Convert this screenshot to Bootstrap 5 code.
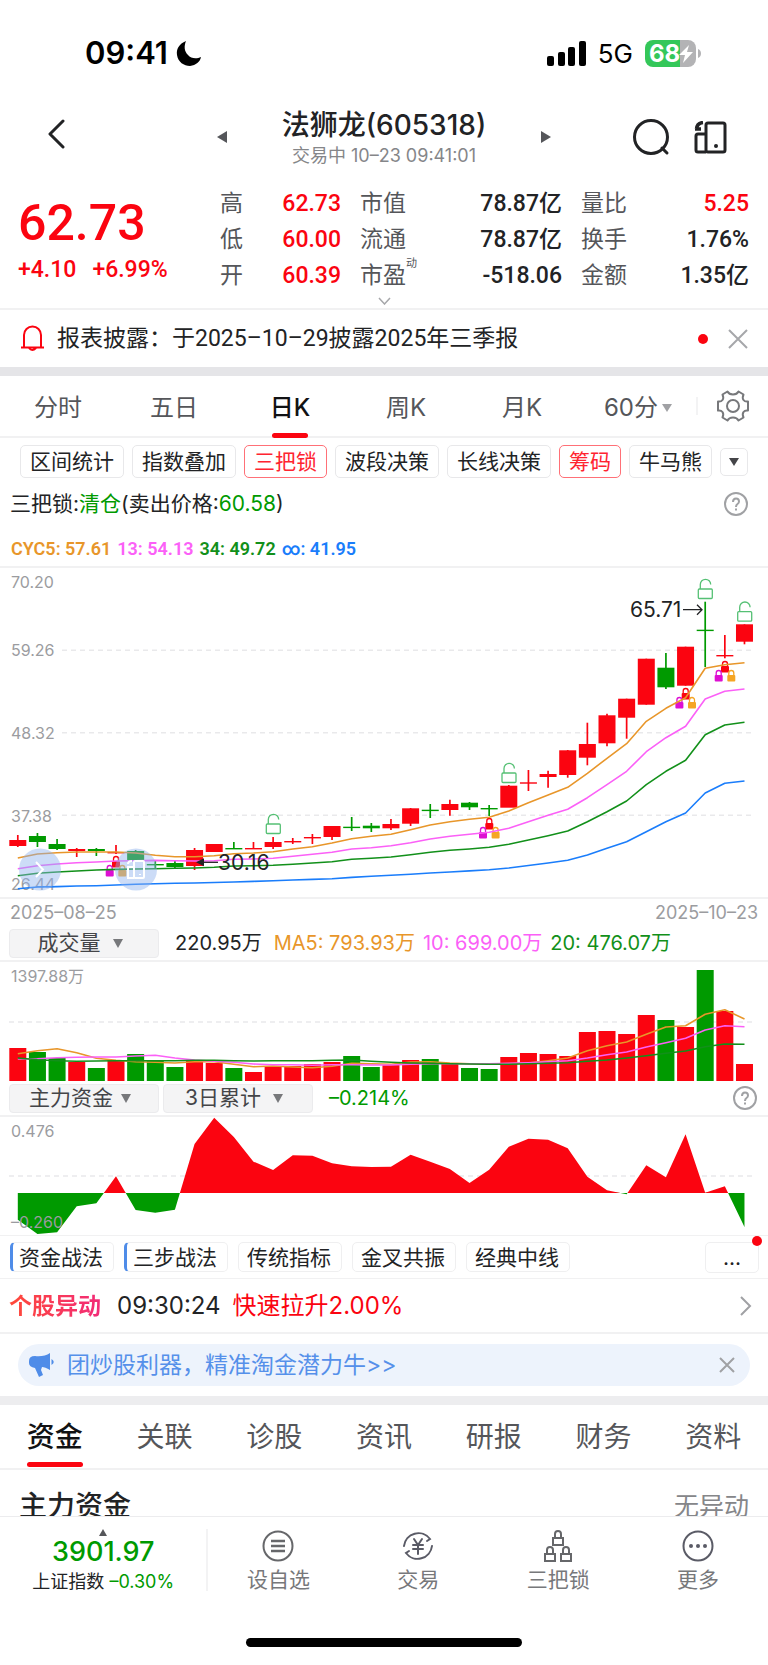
<!DOCTYPE html>
<html lang="zh-CN">
<head>
<meta charset="utf-8">
<meta name="viewport" content="width=device-width, initial-scale=1">
<title>法狮龙(605318)</title>
<link href="https://cdn.jsdelivr.net/npm/bootstrap@5.3.0/dist/css/bootstrap.min.css" rel="stylesheet">
<style>
:root{--up:#fb0410;--down:#009a00;--line:#f1f1f2;--ink:#222325;--soft:#55565a;--pale:#9b9ca0}
body{font-family:Inter,"Noto Sans CJK SC",sans-serif;color:var(--ink);background:#fff;line-height:1.5;overflow-x:hidden}
.din{font-family:Roboto,"Noto Sans CJK SC",sans-serif;font-weight:500}
button{background:none;border:0;padding:0;color:inherit}
a{color:inherit;text-decoration:none}
svg{display:block;flex:none}
.up{color:var(--up)}.down{color:var(--down)}.soft{color:var(--soft)}.pale{color:var(--pale)}
.c-orange{color:#e8962a}.c-pink{color:#fb60f7}.c-green{color:#12901a}.c-blue{color:#1a7dfb}
.rule-b{border-bottom:2px solid var(--line)}
.band{height:9px;background:#e5e5e8}
.band.light{background:#ededef}
.status{height:97px;padding:9px 66px 0 85px}
.clock{font-size:31px;font-weight:600}
.net{font-size:26px}
.head{height:80px;padding:0 41px}
.back{padding-left:6px}
.head-mid{width:334px}
.title{font-size:28px;font-weight:500;line-height:38px}
.subtitle{font-size:18px;line-height:24px;color:#858689}
.quote{display:grid;grid-template-columns:183fr 121fr 202fr 168fr;column-gap:19px;padding:9px 19px 0 18px}
.price{font-size:50px;line-height:60px;padding-top:7px}
.change{font-size:23px;line-height:34px}
.quote dl>div{height:36px;font-size:23px;line-height:36px}
.quote dt{font-weight:400;color:var(--soft)}
.quote sup{font-size:11px;top:-16px}
.more{height:16px}
.notice{height:57px;padding:0 20px;font-size:23px;line-height:33px}
.notice .din{font-weight:400}
.dot{width:10px;height:10px;border-radius:50%;background:var(--up)}
.tabs{height:62px}
.tabs button{font-size:24px;position:relative}
.tabs .col{padding-top:4px}
.tabs .active,.subtabs .active{color:#111214;font-weight:500}
.tabs .active::after,.subtabs .active::after{content:"";position:absolute;left:50%;bottom:-2px;width:36px;height:5px;margin-left:-18px;border-radius:3px;background:var(--up)}
.set{width:70px}
.chips{padding:7px 20px 0;gap:8px}
.chip{border:1px solid #e8e8ea;border-radius:5px;font-size:21px;line-height:31px;padding:0 9px;white-space:nowrap}
.chip.on{border-color:#ff7077;color:#ff2430}
.chip.sm{width:29px;height:28px;padding:0}
.info{height:52px;padding:0 20px 0 10px;font-size:21px}
.cyc{height:38px;padding:0 11px;font-size:18px;font-weight:600;gap:6px}
.dates{height:29px;padding:0 10px;font-size:18px;border-top:2px solid var(--line)}
.ind{height:36px;padding:0 11px 0 9px;font-size:20px}
.pick{width:150px;height:29px;background:#f4f4f5;border:1px solid #ebebed;border-radius:4px;font-size:21px;line-height:24px;color:#444548;padding-right:8px}
.plot{width:100%;height:auto}
.plot text{font-family:Inter,"Noto Sans CJK SC",sans-serif;font-size:16px;fill:#9b9ca0}
.plot .note{font-size:21px;fill:#222325}
.strat{height:44px;padding:0 9px 0 10px;gap:10px;border-top:1px solid var(--line);border-bottom:1px solid var(--line)}
.strat .chip{width:104px;height:30px;line-height:27px;border-color:#efeff0;padding:0 2px 0 0}
.strat .bar{border-left:3px solid #4f8ce8;padding-right:4px}
.strat .etc{width:54px;height:31px;padding:0}
.mark-new{position:absolute;right:-4px;top:-7px}
.alert-row{height:55px;padding:1px 16px 0 9px;font-size:24px}
.grad{font-size:23px;font-weight:700;background:linear-gradient(90deg,#ff4a38,#f22a78);-webkit-background-clip:text;background-clip:text;color:transparent}
.promo{height:42px;margin:10px 18px;border-radius:21px;background:#edf3fc;color:#5590ea;font-size:23px;padding:0 15px 0 11px}
.subtabs{height:65px}
.subtabs a{font-size:28px;position:relative;color:var(--soft)}
.subtabs .active::after{width:56px;margin-left:-28px;bottom:1px}
.fund{height:46px;overflow:hidden;padding:15px 19px 0}
.fund h2{font-size:28px;line-height:42px;font-weight:500}
.fund span{font-size:25px;line-height:42px;color:#858689}
.dock{border-top:1px solid #ececee;padding-top:12px}
.index{flex:207 1 0}
.dock nav{flex:561 1 0}
.index b{font-size:27px;font-weight:500;line-height:32px}
.index small{font-size:18px;line-height:28px}
.dock nav a{font-size:21px;line-height:34px;color:#77787b}
.vr-l{width:2px;height:62px;background:#f3f3f4}
.tabs .vr-l{height:18px}
.homebar{width:276px;height:9px;border-radius:5px;background:#000;margin:41px auto 13px}
</style>
</head>
<body>
<div class="status d-flex align-items-center justify-content-between">
  <div class="d-flex align-items-center gap-2 text-black"><span class="clock">09:41</span>
    <svg width="26" height="27" viewBox="0 0 26 27"><path d="M10 1C3 4 0 9 1 15c1 7 7 11 13 11 6-1 10-4 11-9-4 2-10 2-13-2-4-4-4-9-2-14z"/></svg></div>
  <div class="d-flex align-items-center text-black">
    <svg width="39" height="25" viewBox="0 0 39 25"><rect y="15" width="7" height="10" rx="2"/><rect x="11" y="11" width="7" height="14" rx="2"/><rect x="21" y="6" width="7" height="19" rx="2"/><rect x="32" width="7" height="25" rx="2"/></svg>
    <span class="net mx-2 px-1">5G</span>
    <svg width="57" height="27" viewBox="0 0 57 27"><path d="M8 0h27v27H8a8 8 0 0 1-8-8V8a8 8 0 0 1 8-8z" fill="#34c759"/><path d="M35 0h8a8 8 0 0 1 8 8v11a8 8 0 0 1-8 8h-8z" fill="#b3b3b5"/><path d="M53 9c4 1 4 8 0 9z" fill="#b3b3b5"/><text x="4" y="22" font-family="Inter, sans-serif" font-size="24" font-weight="700" fill="#fff">68</text><path d="M44 5 34 15h6l-2 8 10-11h-6z" fill="#fff"/></svg>
  </div>
</div>

<header class="head d-flex align-items-center">
  <div class="col"><button class="back" aria-label="返回"><svg width="19" height="30" viewBox="0 0 19 30" fill="none" stroke="#222325" stroke-width="3" stroke-linecap="round" stroke-linejoin="round"><path d="M16 2 3 15l13 13"/></svg></button></div>
  <div class="head-mid d-flex align-items-center justify-content-between">
    <button aria-label="上一只"><svg width="10" height="12" viewBox="0 0 10 12"><path d="M10 0v12L0 6z" fill="#55565a"/></svg></button>
    <div class="text-center"><h1 class="title m-0">法狮龙(605318)</h1><div class="subtitle">交易中 10–23 09:41:01</div></div>
    <button aria-label="下一只"><svg width="10" height="12" viewBox="0 0 10 12"><path d="M0 0v12l10-6z" fill="#55565a"/></svg></button>
  </div>
  <div class="col d-flex justify-content-end align-items-center gap-4">
    <button aria-label="搜索"><svg width="38" height="38" viewBox="0 0 38 38" fill="none" stroke="#222325" stroke-width="3" stroke-linecap="round"><circle cx="19" cy="19" r="16.500"/><path d="m30 30 5 5"/></svg></button>
    <button aria-label="红包"><svg width="33" height="33" viewBox="0 0 33 33" fill="none" stroke="#222325" stroke-width="3" stroke-linejoin="round"><rect x="12" y="2" width="19" height="29" rx="2"/><path d="M12 13H4q-2 0-2 2v14q0 2 2 2h8"/><path d="M1 8h6M2.500 8q.5-6 6.500-6.500" stroke-width="3.500"/><circle cx="22" cy="25" r="2" fill="#222325" stroke="none"/></svg></button>
  </div>
</header>

<section class="quote din">
  <div class="up text-nowrap"><div class="price">62.73</div><div class="change d-flex gap-3"><span>+4.10</span><span>+6.99%</span></div></div>
  <dl class="m-0"><div class="d-flex justify-content-between"><dt>高</dt><dd class="up">62.73</dd></div><div class="d-flex justify-content-between"><dt>低</dt><dd class="up">60.00</dd></div><div class="d-flex justify-content-between"><dt>开</dt><dd class="up">60.39</dd></div></dl>
  <dl class="m-0"><div class="d-flex justify-content-between"><dt>市值</dt><dd>78.87亿</dd></div><div class="d-flex justify-content-between"><dt>流通</dt><dd>78.87亿</dd></div><div class="d-flex justify-content-between"><dt>市盈<sup>动</sup></dt><dd>-518.06</dd></div></dl>
  <dl class="m-0"><div class="d-flex justify-content-between"><dt>量比</dt><dd class="up">5.25</dd></div><div class="d-flex justify-content-between"><dt>换手</dt><dd>1.76%</dd></div><div class="d-flex justify-content-between"><dt>金额</dt><dd>1.35亿</dd></div></dl>
</section>
<div class="more rule-b d-flex justify-content-center"><button aria-label="展开"><svg width="13" height="8" viewBox="0 0 13 8" fill="none" stroke="#a6a7aa" stroke-width="1.500"><path d="m1 1 5.500 6L12 1"/></svg></button></div>

<div class="notice d-flex align-items-center">
  <svg width="25" height="27" viewBox="0 0 25 27" fill="none" stroke="#fb0410" stroke-width="2" stroke-linejoin="round"><path d="M4 22V10a8 8 0 0 1 17 0v12M1 22.500h23M9 23q3 4 7 0"/></svg>
  <span class="din ms-2 ps-1 flex-fill">报表披露：于2025–10–29披露2025年三季报</span>
  <span class="dot me-3"></span>
  <button class="ms-1" aria-label="关闭"><svg width="20" height="20" viewBox="0 0 20 20" stroke="#a6a7aa" stroke-width="2"><path d="m1 1 18 18M19 1 1 19"/></svg></button>
</div>
<div class="band"></div>

<div class="tabs rule-b d-flex align-items-stretch soft">
  <div class="d-flex flex-fill">
    <button class="col">分时</button><button class="col">五日</button><button class="col active">日K</button><button class="col">周K</button><button class="col">月K</button>
    <button class="col d-flex align-items-center justify-content-center">60分<svg class="ms-1" width="10" height="8" viewBox="0 0 10 8"><path d="M0 0h10L5 8z" fill="#a0a1a4"/></svg></button>
  </div>
  <div class="vr-l my-auto"></div>
  <button class="set d-flex align-items-center justify-content-center" aria-label="设置"><svg width="32" height="32" viewBox="0 0 32 32" fill="none" stroke="#77787b" stroke-width="2" stroke-linejoin="round"><path d="M10.500 1.500Q12 4.500 16 4.500t5.500-3l5 3Q25 8 26.500 10t4.500 1.500v9Q28 20 26.500 22t0 5.500l-5 3Q20 27.500 16 27.500t-5.500 3l-5-3Q7 24 5.500 22T1 20.500v-9Q4 12 5.500 10t0-5.500z"/><circle cx="16" cy="16" r="6"/></svg></button>
</div>

<div class="chips d-flex align-items-center">
  <button class="chip">区间统计</button><button class="chip">指数叠加</button><button class="chip on">三把锁</button><button class="chip">波段决策</button><button class="chip">长线决策</button><button class="chip on">筹码</button><button class="chip">牛马熊</button>
  <button class="chip sm d-flex align-items-center justify-content-center" aria-label="更多指标"><svg width="10" height="8" viewBox="0 0 10 8"><path d="M0 0h10L5 8z" fill="#444548"/></svg></button>
</div>
<div class="info d-flex align-items-center justify-content-between">
  <span>三把锁:<span class="down">清仓</span>(卖出价格:<span class="down">60.58</span>)</span>
  <button aria-label="帮助"><svg width="24" height="24" viewBox="0 0 24 24" fill="none" stroke="#a0a1a4" stroke-width="2"><circle cx="12" cy="12" r="11"/><path d="M9 10q0-3.500 3-3.500T15 9.500q0 1.500-1.500 2.500T12 15"/><path d="M12 16.500v2"/></svg></button>
</div>
<div class="cyc din rule-b d-flex align-items-center"><span class="c-orange">CYC5: 57.61</span><span class="c-pink">13: 54.13</span><span class="c-green">34: 49.72</span><span class="c-blue">∞: 41.95</span></div>

<svg id="kline" class="plot" viewBox="0 568 768 329" role="img" aria-label="日K线"></svg>
<div class="dates pale d-flex align-items-center justify-content-between"><span>2025–08–25</span><span>2025–10–23</span></div>

<div class="ind rule-b d-flex align-items-center">
  <button class="pick d-flex align-items-center justify-content-center gap-2">成交量<svg class="ms-1" width="10" height="9" viewBox="0 0 10 9"><path d="M0 0h10L5 9z" fill="#77787b"/></svg></button>
  <span class="ms-3">220.95万</span><span class="c-orange ms-2 ps-1">MA5: 793.93万</span><span class="c-pink ms-2">10: 699.00万</span><span class="c-green ms-2">20: 476.07万</span>
</div>
<svg id="volume" class="plot" viewBox="0 0 768 119" role="img" aria-label="成交量"></svg>

<div class="ind rule-b d-flex align-items-center">
  <button class="pick d-flex align-items-center justify-content-center gap-2">主力资金<svg width="10" height="9" viewBox="0 0 10 9"><path d="M0 0h10L5 9z" fill="#77787b"/></svg></button>
  <button class="pick ms-1 d-flex align-items-center justify-content-center gap-2">3日累计<svg class="ms-1" width="10" height="9" viewBox="0 0 10 9"><path d="M0 0h10L5 9z" fill="#77787b"/></svg></button>
  <span class="down ms-3 flex-fill">–0.214%</span>
  <button aria-label="帮助"><svg width="24" height="24" viewBox="0 0 24 24" fill="none" stroke="#a0a1a4" stroke-width="2"><circle cx="12" cy="12" r="11"/><path d="M9 10q0-3.500 3-3.500T15 9.500q0 1.500-1.500 2.500T12 15"/><path d="M12 16.500v2"/></svg></button>
</div>
<svg id="fund" class="plot" viewBox="0 0 768 118" role="img" aria-label="主力资金"></svg>

<div class="strat d-flex align-items-center">
  <button class="chip bar">资金战法</button><button class="chip bar">三步战法</button><button class="chip">传统指标</button><button class="chip">金叉共振</button><button class="chip">经典中线</button>
  <button class="chip etc ms-auto position-relative">...<span class="dot mark-new"></span></button>
</div>
<div class="alert-row rule-b d-flex align-items-center">
  <span class="grad">个股异动</span><span class="ms-3">09:30:24</span><span class="up ms-2 ps-1 flex-fill">快速拉升2.00%</span>
  <svg width="12" height="20" viewBox="0 0 12 20" fill="none" stroke="#a0a1a4" stroke-width="2"><path d="m1 1 9 9-9 9"/></svg>
</div>
<div class="promo d-flex align-items-center">
  <svg width="26" height="24" viewBox="0 0 26 24" fill="#4f8ce8"><path d="M6 3q9 1 15-3v17q-5-3-8-3l-1 3 2 5-4 2-4-9q-6-1-6-5V8q0-5 6-5z"/><path d="M22.500 6q4.500 3 0 6z"/></svg>
  <a href="#" class="ms-2 ps-1 flex-fill">团炒股利器，精准淘金潜力牛&gt;&gt;</a>
  <button aria-label="关闭"><svg width="16" height="16" viewBox="0 0 16 16" stroke="#a0a1a4" stroke-width="2"><path d="m1 1 14 14M15 1 1 15"/></svg></button>
</div>
<div class="band light"></div>

<nav class="subtabs rule-b d-flex">
  <a href="#" class="col d-flex align-items-center justify-content-center active">资金</a><a href="#" class="col d-flex align-items-center justify-content-center">关联</a><a href="#" class="col d-flex align-items-center justify-content-center">诊股</a><a href="#" class="col d-flex align-items-center justify-content-center">资讯</a><a href="#" class="col d-flex align-items-center justify-content-center">研报</a><a href="#" class="col d-flex align-items-center justify-content-center">财务</a><a href="#" class="col d-flex align-items-center justify-content-center">资料</a>
</nav>
<section class="fund d-flex justify-content-between"><h2>主力资金</h2><span>无异动</span></section>

<footer class="dock">
  <div class="d-flex">
    <div class="index text-center d-flex flex-column align-items-center">
      <svg width="8" height="7" viewBox="0 0 8 7"><path d="M4 0l4 7H0z" fill="#55565a"/></svg>
      <b class="down">3901.97</b><small>上证指数 <span class="down">–0.30%</span></small>
    </div>
    <div class="vr-l"></div>
    <nav class="d-flex text-center">
      <a href="#" class="col d-flex flex-column align-items-center"><svg width="32" height="34" viewBox="0 0 32 34" fill="none" stroke="#66676a" stroke-width="2"><circle cx="16" cy="17" r="14.500"/><path d="M9 12h14M9 17h14M9 22h14" stroke-width="2.500"/></svg>设自选</a>
      <a href="#" class="col d-flex flex-column align-items-center"><svg width="32" height="34" viewBox="0 0 32 34" fill="none" stroke="#5a5b66" stroke-width="2" stroke-linecap="round"><path d="M2 17A14.500 14.500 0 0 1 28 10l-3 2M30 17A14.500 14.500 0 0 1 4 24l3-2"/><path d="m12 10 4 6 4-6M16 16v9M11 16h10M11 20h10"/></svg>交易</a>
      <a href="#" class="col d-flex flex-column align-items-center"><svg width="32" height="34" viewBox="0 0 32 34" fill="none" stroke="#66676a" stroke-width="2"><path d="M13 9V5q0-3 3-3t3 3v4M11 9h10v7H11zM5 25v-4q0-3 3-3t3 3v4M3 25h10v7H3zM21 25v-4q0-3 3-3t3 3v4M19 25h10v7H19z"/></svg>三把锁</a>
      <a href="#" class="col d-flex flex-column align-items-center"><svg width="32" height="34" viewBox="0 0 32 34" fill="none" stroke="#5a5b66" stroke-width="2"><circle cx="16" cy="17" r="14.500"/><g fill="#5a5b66" stroke="none"><circle cx="9" cy="17" r="2"/><circle cx="16" cy="17" r="2"/><circle cx="23" cy="17" r="2"/></g></svg>更多</a>
    </nav>
  </div>
  <div class="homebar"></div>
</footer>

<script>
const UP='#fb0410',DOWN='#009a00',COL=['#e8962a','#fb60f7','#12901a','#1a7dfb'];
const X=i=>17.8+i*19.64;
const poly=(ys,c)=>`<polyline fill="none" stroke="${c}" stroke-width="1.600" stroke-linejoin="round" points="${ys.map((y,i)=>X(i).toFixed(1)+','+y.toFixed(1)).join(' ')}"/>`;
const grid=(y,a=9)=>`<path d="M${a} ${y}H755" stroke="#e9e9eb" stroke-width="1.500" stroke-dasharray="5 4"/>`;

// colour, high, low, body top, body bottom
const K=[['r',835,847,840,846],['g',833,847,836,842],['g',839,850,844,849],['r',848,857,849,851],['g',848,856,849,851],['r',845,854,852,853],['g',850,862,851,860],['g',861,868,864,865],['g',861,868,863,867],['r',848,870,850,866],['r',844,852,844,852],['g',842,849,848,849],['r',842,849,848,849],['r',837,849,842,847],['r',838,844,841,842],['r',834,844,837,838],['r',826,840,826,837],['g',817,831,826.7,828],['g',823,832,825.7,828.3],['r',819,830,824,828.3],['r',808,826,808.3,823.7],['g',804,818,809.7,811],['r',799.7,815.7,804,810],['g',802,810,802.7,807.3],['g',805,816,808,809.3],['r',785,807,785.7,807.7],['r',770,791,782.3,783.7],['r',770.7,787.7,774,777],['r',750,777.7,750.3,775],['r',722.7,765.3,744,757.7],['r',713.7,746.3,715.3,743.3],['r',698.7,738.7,698.7,717.7],['r',658.7,704.7,658.7,704.7],['g',653,689,667.7,687.3],['r',646.7,685.7,646.7,685.7],['g',601.7,667,629.7,631],['r',635,658.3,655,656.3],['r',624.3,644.3,624.3,641.7]];
const MA=[
[858,854,852.7,852,852,852,853,855.3,856.7,856.7,855.7,853.7,853,851.7,849,846.7,843,838.7,836.3,834.3,829.7,825,821.7,819.3,817.3,811,802.7,795,787.3,773.3,758.3,743.7,721.3,708.3,697.7,668.3,664.7,662.7],
[868.7,865.7,864,862.7,862,861,860.7,860.4,860.7,861,860.7,859.3,859,858.3,856.3,854.3,852.3,849,847.7,845.7,842.7,839,836.3,834.3,832.3,828.3,821.7,815.3,809.3,797.7,784.7,771.3,751.7,737.7,726.3,699,691.3,689],
[875.7,873.3,872,871,870,869.4,869,868.7,868.3,868,867.3,866,865.7,865.3,864.3,863,861.7,859.3,858.3,857,854.7,852.3,850.3,849,847.3,844.3,840,835.7,831,821.7,811.7,801,784.7,771.3,760.3,734.7,725,722.3],
[888.7,887,886.6,886,885.7,885,884.3,883.8,883.3,883,882.5,882,881.4,880.7,880,879.4,878.7,877.4,876.3,875.3,874.3,873,872,870.9,869.7,868,865.5,863,860.3,855,848.3,841.7,831.7,821.7,813,793,783.3,781]];
const openLock=(x,y)=>`<g fill="none" stroke="#55c074" stroke-width="1.300"><rect x="${x-7}" y="${y+10}" width="14" height="9.500" rx="1"/><path d="M${x-5} ${y+10}v-4.500a5.200 5.200 0 0 1 10.400 0"/></g>`;
const lock=(x,y,c)=>`<rect x="${x-4}" y="${y+5}" width="8" height="6.500" rx="1" fill="${c}"/><path d="M${x-2.500} ${y+5}v-2a2.500 2.500 0 0 1 5 0v2" fill="none" stroke="${c}" stroke-width="1.300"/>`;
const trio=(x,y)=>lock(x,y,'#fb0410')+lock(x-6.3,y+9,'#dd0fd2')+lock(x+6.3,y+9,'#f5a524');
const t=(x,y,s,c='')=>`<text x="${x}" y="${y}" class="${c}">${s}</text>`;

document.getElementById('kline').innerHTML=
 grid(650.3,62)+grid(732.7,62)+grid(815.3,62)
 +t(11,588,'70.20')+t(11,656,'59.26')+t(11,739,'48.32')+t(11,822,'37.38')+t(11,890,'26.44')
 +K.map((k,i)=>{const c=k[0]=='r'?UP:DOWN,x=X(i);return `<path d="M${x} ${k[1]}V${k[2]}" stroke="${c}" stroke-width="1.700"/><rect x="${x-8.5}" y="${k[3]}" width="17" height="${Math.max(1.4,k[4]-k[3])}" fill="${c}"/>`}).join('')
 +trio(116,856)+trio(489.3,818)+trio(685.7,688)+trio(725,661)
 +MA.map((m,i)=>poly(m,COL[i])).join('')
 +openLock(273.3,814)+openLock(509,763)+openLock(705.3,579)+openLock(744.7,601.7)
 +t(630,617,'65.71','note')+t(218,869.5,'30.16','note')
 +'<path d="M683 609.700h19m-5-5 5 5-5 5" fill="none" stroke="#222325" stroke-width="1.300"/><path d="M218 862.300h-14" stroke="#222325" stroke-width="1.300"/><path d="m196 862.300 8-4v8z" fill="#222325"/>'
 +'<g fill="#8fb2ee" fill-opacity=".45"><circle cx="40" cy="869.500" r="21"/><circle cx="136" cy="869.500" r="21"/></g>'
 +'<g fill="none" stroke="#fff" stroke-width="2"><path d="m36 862 7 7.500-7 7.500"/><rect x="134" y="861" width="10" height="17" rx="1"/><path d="M134 867h-6v11h6M128 864q0-3 4-3M140 874v1"/></g>';

const V=[33,29,23,19,13,21,27,20,14,20,18,13,9,15,15,17,19,25,14,16,21,22,18,13,12,24,28,27,25,49,50,47,66,61,54,111,70,17];
const VC='rggrgrgggrrgrrrrrggrrgrggrrrrrrrrgrgrr';
const VM=[[395,386,380,392,409,415,419,421,423,419,419,427,434,432,435,437,433,424,425,427,420,419,423,425,427,425,423,416,408,386,371,360,337,315,311,277,263,291],
[411,410,407,406,405,405,402,400,408,414,418,421,426,428,428,430,428,428,429,429,427,425,425,425,425,424,422,419,416,408,398,390,375,362,349,324,311,314],
[408,413,416,418,417,416,416,416,416,415,415,416,417,416,416,416,415,414,418,421,423,424,425,426,427,427,425,424,422,418,414,408,401,394,387,374,366,367]];
document.getElementById('volume').innerHTML=grid(60)+t(11,20,'1397.88万')
 +V.map((v,i)=>`<rect x="${X(i)-8.5}" y="${119-v}" width="17" height="${v}" fill="${VC[i]=='r'?UP:DOWN}"/>`).join('')
 +VM.map((m,i)=>poly(m.map(v=>v/3-40),COL[i])).join('');

const F=[418,461,456,378,369,288,389,397,388,191,112,170,244,269,225,226,249,258,260,259,223,244,266,308,268,199,175,178,204,289,330,342,255,291,162,337,318,440].map(v=>v/3-36.7);
const base=76,area=`M${X(0)} ${base}`+F.map((v,i)=>`L${X(i)} ${v}`).join('')+`L${X(37)} ${base}z`;
document.getElementById('fund').innerHTML=`<clipPath id="above"><rect width="768" height="${base}"/></clipPath><clipPath id="below"><rect y="${base-.5}" width="768" height="50"/></clipPath>`
 +grid(59)+`<path d="${area}" fill="${DOWN}" clip-path="url(#below)"/><path d="${area}" fill="${UP}" clip-path="url(#above)"/>`
 +t(11,20,'0.476')+t(11,111,'–0.260');
</script>
<script src="https://cdn.jsdelivr.net/npm/bootstrap@5.3.0/dist/js/bootstrap.bundle.min.js"></script>
</body>
</html>
